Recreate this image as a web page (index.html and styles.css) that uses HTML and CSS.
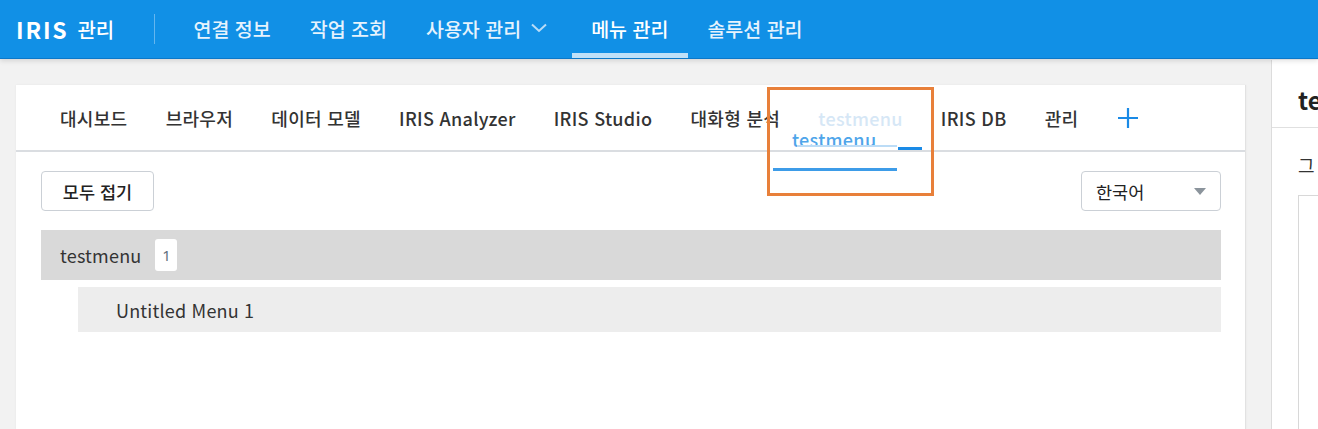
FILE: index.html
```html
<!DOCTYPE html>
<html lang="ko">
<head>
<meta charset="utf-8">
<title>IRIS 관리</title>
<link rel="stylesheet" href="styles.css">
</head>
<body>
<header class="topbar">
  <div class="brand"><span class="brand-iris">IRIS</span><span class="brand-sub">관리</span></div>
  <div class="divider"></div>
  <nav class="gnb">
    <a class="gnb-item">연결 정보</a>
    <a class="gnb-item">작업 조회</a>
    <a class="gnb-item">사용자 관리
      <svg class="chev" width="18" height="10" viewBox="0 0 18 10"><path d="M2 1.5 L9 8 L16 1.5" fill="none" stroke="#b9dcf7" stroke-width="2"/></svg>
    </a>
    <a class="gnb-item active">메뉴 관리</a>
    <a class="gnb-item">솔루션 관리</a>
  </nav>
</header>
<div class="page">
  <section class="card">
    <div class="tabbar">
      <span class="tab">대시보드</span>
      <span class="tab">브라우저</span>
      <span class="tab">데이터 모델</span>
      <span class="tab">IRIS Analyzer</span>
      <span class="tab">IRIS Studio</span>
      <span class="tab">대화형 분석</span>
      <span class="tab tab-ghost">testmenu</span>
      <span class="tab">IRIS DB</span>
      <span class="tab">관리</span>
      <span class="tab tab-add"><svg width="22" height="22" viewBox="0 0 22 22"><path d="M11 1 V21 M1 11 H21" stroke="#1a8ae6" stroke-width="2.2" fill="none"/></svg></span>
      <div class="drag-box"></div>
      <span class="drag-text">testmenu</span>
      <span class="drag-line1"></span>
      <span class="drag-line2"></span>
      <span class="drag-line3"></span>
    </div>
    <div class="content">
      <div class="toolbar">
        <button class="btn">모두 접기</button>
        <div class="select"><span>한국어</span><span class="caret"></span></div>
      </div>
      <div class="group-row"><span class="group-name">testmenu</span><span class="badge">1</span></div>
      <div class="child-row">Untitled Menu 1</div>
    </div>
  </section>
  <aside class="side">
    <div class="side-head">te</div>
    <div class="side-body">
      <div class="side-label">그</div>
      <div class="side-box"></div>
    </div>
  </aside>
</div>
</body>
</html>
```
FILE: styles.css
```css
* { box-sizing: border-box; }
html, body { margin: 0; padding: 0; }
body {
  font-family: "Noto Sans CJK KR", "Noto Sans", sans-serif;
  background: #f2f2f2;
  color: #333;
  width: 1318px;
  height: 429px;
  overflow: hidden;
}
.topbar {
  height: 59px;
  background: #1190e6;
  border-bottom: 1px solid #0c78c9;
  display: flex;
  align-items: center;
  box-shadow: 0 2px 5px rgba(0,0,0,0.12);
  position: relative;
  z-index: 2;
}
.brand { display: flex; align-items: center; padding-left: 16px; color: #fff; width: 154px; flex-shrink: 0; }
.brand-iris { font-size: 23px; font-weight: 700; letter-spacing: 1.8px; }
.brand-sub { font-size: 20px; margin-left: 9px; font-weight: 500; }
.divider { width: 1px; height: 30px; background: rgba(255,255,255,0.35); flex-shrink: 0; }
.gnb { display: flex; height: 100%; margin-left: 19px; }
.gnb-item {
  display: flex; align-items: center;
  height: 58px;
  padding: 3px 19.5px 0;
  font-size: 19.5px;
  font-weight: 500;
  color: #e6f3fd;
  border-bottom: 5px solid transparent;
  white-space: nowrap;
}
.gnb-item.active { border-bottom-color: #bfe0f8; color: #fff; }
.chev { margin-left: 9px; margin-right: 4px; }
.page { display: flex; height: 370px; }
.card {
  width: 1230px;
  flex-shrink: 0;
  margin: 26px 0 0 16px;
  background: #fff;
  border-right: 1px solid #e2e2e2;
  box-shadow: 0 0 2px rgba(0,0,0,0.06);
}
.tabbar {
  position: relative;
  height: 67px;
  border-bottom: 2px solid #dadde1;
  display: flex;
  align-items: center;
  padding-left: 25px;
}
.tab {
  font-size: 18px;
  font-weight: 500;
  color: #333;
  padding: 0 19.1px;
  letter-spacing: 0.3px;
  white-space: nowrap;
}
.tab:first-child { padding-left: 19px; }
.tab-ghost { color: #d6e7f6; }
.tab-add { display: flex; align-items: center; padding-top: 1px; }
.drag-box {
  position: absolute;
  left: 751px; top: 2px;
  width: 167px; height: 109px;
  border: 3px solid #e8803a;
}
.drag-text {
  position: absolute;
  left: 776px; top: 41px;
  font-size: 18px;
  font-weight: 500;
  letter-spacing: 0.3px;
  color: #4ea5ea;
}
.drag-line1 { position: absolute; left: 781px; top: 60px; width: 100px; height: 2px; background: #bcdcf6; }
.drag-line2 { position: absolute; left: 882px; top: 62px; width: 24px; height: 3px; background: #1a8ae6; }
.drag-line3 { position: absolute; left: 757px; top: 83px; width: 124px; height: 3px; background: #3d9ce8; }
.content { padding: 19px 24px 0 25px; }
.toolbar { display: flex; justify-content: space-between; align-items: center; }
.btn {
  width: 113px; height: 40px;
  background: #fff;
  border: 1px solid #cbd0d6;
  border-radius: 4px;
  font-family: inherit;
  font-size: 17.5px;
  font-weight: 500;
  color: #222;
  padding: 0;
}
.select {
  width: 140px; height: 40px;
  border: 1px solid #cbd0d6;
  border-radius: 4px;
  display: flex; align-items: center; justify-content: space-between;
  padding: 0 14px 0 14px;
  font-size: 17.5px;
  color: #222;
}
.caret {
  width: 0; height: 0;
  border-left: 6px solid transparent;
  border-right: 6px solid transparent;
  border-top: 7px solid #8b949c;
}
.group-row {
  margin-top: 19px;
  height: 50px;
  background: #d9d9d9;
  display: flex; align-items: center;
  padding-left: 19px;
}
.group-name { font-size: 18px; color: #333; letter-spacing: 0.2px; }
.badge {
  margin-left: 14px;
  width: 22px; height: 32px;
  background: #fff;
  border-radius: 3px;
  display: flex; align-items: center; justify-content: center;
  font-family: "Noto Sans", sans-serif;
  font-size: 15px;
  color: #5f7180;
}
.child-row {
  margin-top: 7px;
  margin-left: 37px;
  height: 45px;
  background: #ededed;
  display: flex; align-items: center;
  padding-left: 38px;
  font-size: 18px;
  letter-spacing: 0.2px;
  color: #333;
}
.side {
  margin-left: 25px;
  flex: 1;
  min-width: 0;
  overflow: hidden;
  background: #fff;
  border-left: 1px solid #dcdcdc;
  margin-top: 1px;
}
.side-head {
  height: 68px;
  border-bottom: 1px solid #e0e0e0;
  padding: 22px 0 0 26px;
  font-size: 24px;
  font-weight: 700;
  color: #222;
  white-space: nowrap;
}
.side-body { padding: 25px 0 0 26px; }
.side-label { font-size: 18px; color: #333; line-height: 24px; }
.side-box { margin-top: 18px; height: 240px; border: 1px solid #d8d8d8; border-right: none; background: #fff; }
```
